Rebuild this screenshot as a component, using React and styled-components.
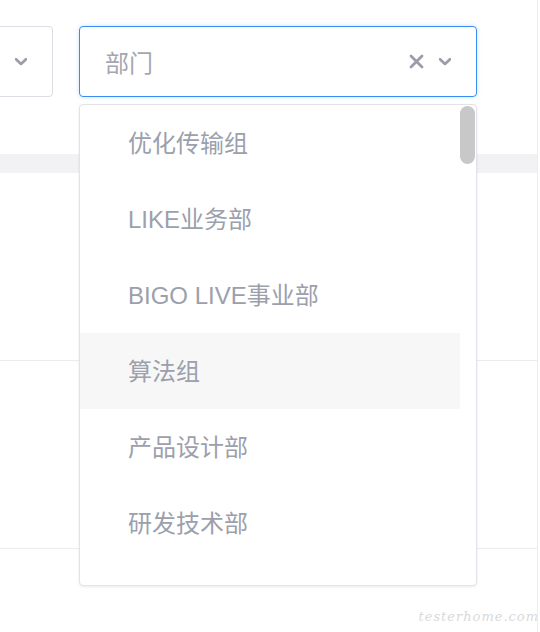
import React from 'react';
import styled, { createGlobalStyle } from 'styled-components';

const GlobalStyle = createGlobalStyle`
  html, body {
    margin: 0;
    padding: 0;
    background: #ffffff;
  }
  body {
    font-family: "Liberation Sans", "Noto Sans CJK SC", sans-serif;
  }
`;

const Page = styled.div`
  position: relative;
  width: 537px;
  height: 632px;
  border-right: 1px solid #ededf0;
  overflow: hidden;
`;

const FilterBar = styled.div`
  height: 154px;
  display: flex;
  justify-content: flex-end;
  align-items: flex-start;
  gap: 26px;
  padding: 26px 60px 0 0;
  box-sizing: border-box;
`;

const SelectWrap = styled.div`
  position: relative;
  flex: 0 0 ${p => p.width}px;
`;

const SelectBox = styled.div`
  height: 71px;
  box-sizing: border-box;
  border: 1px solid ${p => (p.active ? '#3a8df0' : '#dcdde2')};
  border-radius: 4px;
  box-shadow: ${p => (p.active ? '0 0 4px rgba(64, 150, 255, 0.28)' : 'none')};
  display: flex;
  align-items: center;
  padding: 0 25px 0 25px;
  background: #fff;
`;

const Placeholder = styled.span`
  flex: 1;
  font-size: 24px;
  color: #a4a6b2;
`;

const IconSlot = styled.span`
  display: flex;
  align-items: center;
  margin-left: ${p => p.gap || 0}px;
`;

const Divider = styled.div`
  height: 19px;
  background: #f2f2f4;
`;

const TableRow = styled.div`
  height: 187px;
  border-bottom: 1px solid #ececef;
`;

const Dropdown = styled.div`
  position: absolute;
  top: 78px;
  left: 0;
  right: 0;
  height: 482px;
  box-sizing: border-box;
  background: #fff;
  border: 1px solid #e2e3e8;
  border-radius: 4px;
  box-shadow: 0 1px 3px rgba(0, 0, 0, 0.08);
  overflow: hidden;
  z-index: 10;
`;

const OptionList = styled.ul`
  list-style: none;
  margin: 0;
  padding: 0 16px 0 0;
`;

const Option = styled.li`
  height: 76px;
  box-sizing: border-box;
  display: flex;
  align-items: center;
  padding: 0 0 3px 48px;
  font-size: 24px;
  color: #9c9fac;
  white-space: nowrap;
  background: ${p => (p.hover ? '#f7f7f8' : 'transparent')};
`;

const ScrollThumb = styled.div`
  position: absolute;
  top: 1px;
  right: 1px;
  width: 15px;
  height: 58px;
  border-radius: 8px;
  background: #c8c8c9;
`;

const Watermark = styled.div`
  position: absolute;
  right: -2px;
  bottom: 8px;
  font-family: "DejaVu Serif", serif;
  font-style: italic;
  font-size: 13px;
  letter-spacing: 1px;
  color: #d9d9dc;
`;

const Chevron = () => (
  <svg width="12" height="8" viewBox="0 0 12 8">
    <path d="M1 1.2 L6 6 L11 1.2" fill="none" stroke="#9a9ca8" strokeWidth="2.6" strokeLinecap="round" strokeLinejoin="round" />
  </svg>
);

const Clear = () => (
  <svg width="15" height="15" viewBox="0 0 15 15">
    <path d="M2 2 L13 13 M13 2 L2 13" stroke="#9a9ca8" strokeWidth="2.8" strokeLinecap="round" />
  </svg>
);

const departments = [
  '优化传输组',
  'LIKE业务部',
  'BIGO LIVE事业部',
  '算法组',
  '产品设计部',
  '研发技术部',
];

const App = () => {
  return (
    <>
      <GlobalStyle />
      <Page>
        <FilterBar>
          <SelectWrap width={200}>
            <SelectBox>
              <Placeholder />
              <IconSlot>
                <Chevron />
              </IconSlot>
            </SelectBox>
          </SelectWrap>
          <SelectWrap width={398}>
            <SelectBox active>
              <Placeholder>部门</Placeholder>
              <IconSlot>
                <Clear />
              </IconSlot>
              <IconSlot gap={15}>
                <Chevron />
              </IconSlot>
            </SelectBox>
            <Dropdown>
              <OptionList>
                {departments.map((d, i) => (
                  <Option key={d} hover={i === 3}>
                    {d}
                  </Option>
                ))}
              </OptionList>
              <ScrollThumb />
            </Dropdown>
          </SelectWrap>
        </FilterBar>
        <Divider />
        <TableRow />
        <TableRow />
        <Watermark>testerhome.com</Watermark>
      </Page>
    </>
  );
};

export default App;
